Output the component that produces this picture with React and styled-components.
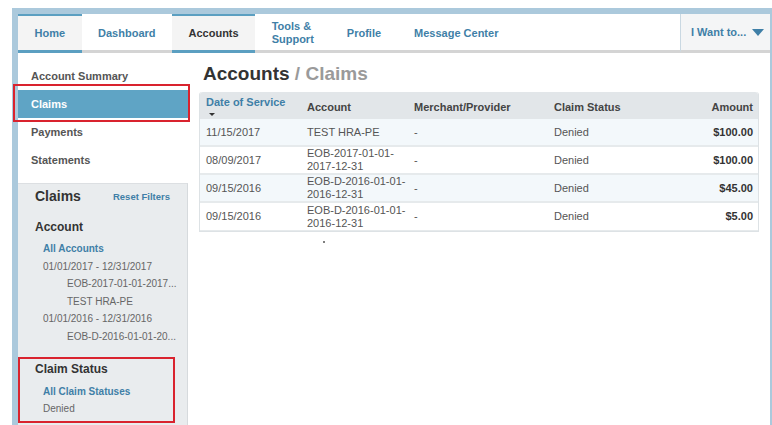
import React from 'react';
import styled, { createGlobalStyle } from 'styled-components';

const GlobalStyle = createGlobalStyle`
  html, body {
    margin: 0;
    background: #fff;
    font-family: "Liberation Sans", Arial, sans-serif;
  }
`

const Page = styled.div`
  padding: 8px 0 0 12px;
  height: 417px;
  overflow: hidden;
`
const Frame = styled.div`
  height: 100%;
  border-top: 6px solid #abc9dc;
  border-left: 6px solid #abc9dc;
  border-right: 2px solid #abc9dc;
  display: flex;
  flex-direction: column;
  background: #fff;
`
const NavBar = styled.nav`
  display: flex;
  height: 39px;
  flex-shrink: 0;
  box-shadow: inset 0 -3px 0 #d4d4d4;
`
const Tab = styled.a`
  display: flex;
  align-items: center;
  padding: 0 16.5px;
  font-size: 11px;
  font-weight: bold;
  line-height: 13px;
  color: ${p => p.$current ? '#333' : '#3f7fa7'};
  background: ${p => p.$active ? '#f4f4f4' : 'transparent'};
  background-clip: padding-box;
  border-top: 2px solid ${p => p.$active ? '#5b9fc1' : 'transparent'};
  border-bottom: 3px solid ${p => p.$active ? '#5b9fc1' : 'transparent'};
  cursor: pointer;
`
const Spacer = styled.div`
  flex: 1;
`
const Actions = styled.div`
  display: flex;
  align-items: center;
  gap: 6px;
  width: 79px;
  padding-left: 10px;
  border-left: 1px solid #c9d8e2;
  border-bottom: 3px solid transparent;
  background: #f4f5f6;
  background-clip: padding-box;
  font-size: 11px;
  font-weight: bold;
  color: #3f7fa7;
`

const Body = styled.div`
  display: flex;
  flex: 1;
  min-height: 0;
`
const Sidebar = styled.aside`
  width: 170px;
  flex-shrink: 0;
  display: flex;
  flex-direction: column;
`
const SideNav = styled.ul`
  list-style: none;
  margin: 0;
  padding: 9px 0 0;
`
const SideItem = styled.li`
  position: relative;
  height: 28px;
  display: flex;
  align-items: center;
  padding-left: 13px;
  font-size: 11px;
  font-weight: bold;
  color: ${p => p.$active ? '#fff' : '#555'};
  background: ${p => p.$active ? '#5fa4c5' : 'transparent'};
  ${p => p.$marked && `
    &::after {
      content: '';
      position: absolute;
      top: -6px;
      bottom: -4px;
      left: -5px;
      right: -2px;
      border: 2px solid #d9232e;
    }
  `}
`
const FilterPanel = styled.div`
  flex: 1;
  margin-top: 9px;
  padding: 2px 17px 0;
  background: #e9ecee;
  border-top: 1px solid #dcdfe2;
  border-right: 1px solid #d6dadd;
`
const PanelHeader = styled.div`
  display: flex;
  justify-content: space-between;
  align-items: center;
  height: 20px;
`
const PanelTitle = styled.h3`
  margin: 0;
  font-size: 14px;
  color: #333;
`
const TextLink = styled.a`
  font-size: ${p => p.$small ? '9.5px' : '10px'};
  font-weight: bold;
  color: #3f7fa7;
  cursor: pointer;
`
const GroupTitle = styled.h4`
  margin: 13px 0 0;
  font-size: 12px;
  line-height: 16px;
  color: #333;
`
const FilterList = styled.ul`
  list-style: none;
  margin: 5px 0 0;
  padding: 0 0 0 8px;
`
const FilterItem = styled.li`
  font-size: 10px;
  line-height: 17.6px;
  color: #666;
  padding-left: ${p => p.$level ? 24 : 0}px;
  white-space: nowrap;
`
const MarkedGroup = styled.div`
  margin: 11px 0 0 -17px;
  width: 138px;
  padding: 2px 0 3px 15px;
  border: 2px solid #d9232e;
  ${GroupTitle} { margin-top: 0; }
  ${FilterList} { margin-top: 6px; }
`

const Main = styled.main`
  flex: 1;
  padding: 10px 11px 0 11px;
`
const Heading = styled.h1`
  margin: 0 0 7px 4px;
  font-size: 19px;
  line-height: 22px;
  color: #333;
  span {
    color: #9a9a9a;
  }
`
const Table = styled.div`
  border: 1px solid #dde2e5;
  border-top: none;
  border-radius: 3px 3px 0 0;
`
const Row = styled.div`
  display: grid;
  grid-template-columns: 101px 107px 140px 1fr 100px;
  align-items: center;
  height: ${p => p.$head ? 27 : 28}px;
  box-sizing: border-box;
  border-bottom: ${p => p.$head ? 'none' : '2px solid #e6eaec'};
  background: ${p => p.$head ? '#e2e6e9' : p.$shaded ? '#f3f8fb' : '#fff'};
  border-radius: ${p => p.$head ? '3px 3px 0 0' : '0'};
  font-size: 11px;
  color: #555;
  &:last-child { border-bottom-width: 1px; }
`
const Cell = styled.div`
  padding: 0 ${p => p.$right ? 5 : 0}px 0 6px;
  text-align: ${p => p.$right ? 'right' : 'left'};
  font-weight: ${p => p.$strong ? 'bold' : 'normal'};
  color: ${p => p.$strong ? '#333' : 'inherit'};
  line-height: 13px;
`
const HeadCell = styled(Cell)`
  font-weight: bold;
  color: ${p => p.$sorted ? '#3f7fa7' : '#444'};
  display: flex;
  flex-direction: column;
  align-items: ${p => p.$right ? 'flex-end' : 'flex-start'};
  padding-top: ${p => p.$sorted ? 0 : 3}px;
`
const SortArrow = styled.span`
  margin: 4px 0 0 3px;
  width: 0;
  height: 0;
  border-left: 3px solid transparent;
  border-right: 3px solid transparent;
  border-top: 3px solid #333;
`
const LoadingDot = styled.div`
  width: 2px;
  height: 2px;
  margin: 9px 0 0 124px;
  background: #555;
  border-radius: 50%;
`

const claims = [
  { date: '11/15/2017', account: ['TEST HRA-PE'], status: 'Denied', amount: '$100.00' },
  { date: '08/09/2017', account: ['EOB-2017-01-01-', '2017-12-31'], status: 'Denied', amount: '$100.00' },
  { date: '09/15/2016', account: ['EOB-D-2016-01-01-', '2016-12-31'], status: 'Denied', amount: '$45.00' },
  { date: '09/15/2016', account: ['EOB-D-2016-01-01-', '2016-12-31'], status: 'Denied', amount: '$5.00' },
]

const Caret = () => (
  <svg width="12" height="7" viewBox="0 0 12 7">
    <polygon points="0,0 12,0 6,7" fill="#3f7fa7" />
  </svg>
)

export default function App() {
  return (
    <Page>
      <GlobalStyle />
      <Frame>
        <NavBar>
          <Tab $active>Home</Tab>
          <Tab>Dashboard</Tab>
          <Tab $active $current>Accounts</Tab>
          <Tab>Tools &amp;<br />Support</Tab>
          <Tab>Profile</Tab>
          <Tab>Message Center</Tab>
          <Spacer />
          <Actions>I Want to... <Caret /></Actions>
        </NavBar>
        <Body>
          <Sidebar>
            <SideNav>
              <SideItem>Account Summary</SideItem>
              <SideItem $active $marked>Claims</SideItem>
              <SideItem>Payments</SideItem>
              <SideItem>Statements</SideItem>
            </SideNav>
            <FilterPanel>
              <PanelHeader>
                <PanelTitle>Claims</PanelTitle>
                <TextLink $small>Reset Filters</TextLink>
              </PanelHeader>
              <GroupTitle>Account</GroupTitle>
              <FilterList>
                <FilterItem><TextLink>All Accounts</TextLink></FilterItem>
                <FilterItem>01/01/2017 - 12/31/2017</FilterItem>
                <FilterItem $level={1}>EOB-2017-01-01-2017...</FilterItem>
                <FilterItem $level={1}>TEST HRA-PE</FilterItem>
                <FilterItem>01/01/2016 - 12/31/2016</FilterItem>
                <FilterItem $level={1}>EOB-D-2016-01-01-20...</FilterItem>
              </FilterList>
              <MarkedGroup>
                <GroupTitle>Claim Status</GroupTitle>
                <FilterList>
                  <FilterItem><TextLink>All Claim Statuses</TextLink></FilterItem>
                  <FilterItem>Denied</FilterItem>
                </FilterList>
              </MarkedGroup>
            </FilterPanel>
          </Sidebar>
          <Main>
            <Heading>Accounts <span>/ Claims</span></Heading>
            <Table>
              <Row $head>
                <HeadCell $sorted>Date of Service<SortArrow /></HeadCell>
                <HeadCell>Account</HeadCell>
                <HeadCell>Merchant/Provider</HeadCell>
                <HeadCell>Claim Status</HeadCell>
                <HeadCell $right>Amount</HeadCell>
              </Row>
              {claims.map((c, i) => (
                <Row key={i} $shaded={i % 2 === 0}>
                  <Cell>{c.date}</Cell>
                  <Cell>{c.account.map((line, j) => <div key={j}>{line}</div>)}</Cell>
                  <Cell>-</Cell>
                  <Cell>{c.status}</Cell>
                  <Cell $right $strong>{c.amount}</Cell>
                </Row>
              ))}
            </Table>
            <LoadingDot />
          </Main>
        </Body>
      </Frame>
    </Page>
  )
}
